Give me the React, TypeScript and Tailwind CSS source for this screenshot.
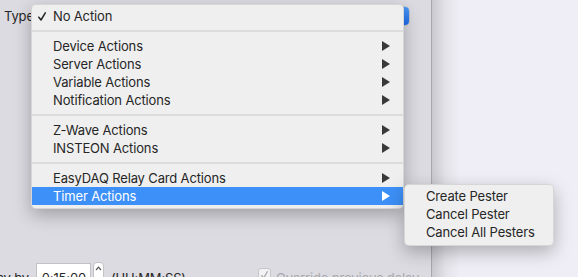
import React from "react";

type Item = { label: string; sub?: boolean; checked?: boolean; active?: boolean };

const groups: Item[][] = [
  [{ label: "No Action", checked: true }],
  [
    { label: "Device Actions", sub: true },
    { label: "Server Actions", sub: true },
    { label: "Variable Actions", sub: true },
    { label: "Notification Actions", sub: true },
  ],
  [
    { label: "Z-Wave Actions", sub: true },
    { label: "INSTEON Actions", sub: true },
  ],
  [
    { label: "EasyDAQ Relay Card Actions", sub: true },
    { label: "Timer Actions", sub: true, active: true },
  ],
];

function Arrow({ white }: { white?: boolean }) {
  return (
    <svg width="8" height="10" viewBox="0 0 8 10" className={white ? "fill-white" : "fill-[#393939]"}>
      <path d="M0 0L8 5L0 10Z" />
    </svg>
  );
}

function Check({ color = "#262626", size = 8 }: { color?: string; size?: number }) {
  return (
    <svg width={size} height={size + 1} viewBox="0 0 8 9" fill="none">
      <path d="M0.8 5.2L3 8L7.3 0.8" stroke={color} strokeWidth="1.5" strokeLinecap="round" strokeLinejoin="round" />
    </svg>
  );
}

function MenuRow({ item }: { item: Item }) {
  return (
    <div
      className={
        "flex h-[18px] items-center " +
        (item.active ? "bg-[#3d90f7] text-white" : "text-[#262626]")
      }
    >
      <div className="flex w-[21px] justify-start pl-[6px]">{item.checked && <Check />}</div>
      <span className="flex-1">{item.label}</span>
      {item.sub && (
        <div className="pr-[13px]">
          <Arrow white={item.active} />
        </div>
      )}
    </div>
  );
}

export default function App() {
  return (
    <div className="relative flex h-[277px] w-[578px] overflow-hidden font-['Inter',sans-serif] text-[13px] leading-4 tracking-[-0.15px] text-[#262626]">
      {/* dialog */}
      <div className="flex h-full w-[432px] shrink-0 flex-col border-r border-[#a9a8af] bg-[#dcdbe2]">
        <div className="flex items-center pt-[6px] pr-[21px]">
          <span className="pl-[4px]">Type</span>
          <div className="ml-[6px] flex h-[20px] flex-1 overflow-hidden rounded-[5px] border border-[#c4c4c8] bg-white">
            <div className="flex-1" />
            <div className="flex w-[17px] flex-col items-center justify-center bg-gradient-to-b from-[#4b98fa] to-[#1f6ff0] text-[7px] leading-[6px] text-white">
              <span>⌃</span>
              <span>⌄</span>
            </div>
          </div>
        </div>

        <div className="mt-auto mb-[-8px] flex h-[22px] shrink-0 items-start whitespace-nowrap">
          <span className="-ml-[23px] mt-[7px] shrink-0">Delay by</span>
          <div className="ml-[7px] flex h-[22px] w-[55px] shrink-0 items-start justify-end border border-[#c2c2c6] bg-white pr-[4px] pt-[6px]">
            0:15:00
          </div>
          <div className="ml-[2px] -mt-[1px] flex h-[22px] w-[11px] shrink-0 justify-center rounded-[4px] border border-[#c2c2c6] bg-white pt-[3px]">
            <svg width="7" height="5" viewBox="0 0 7 5" fill="none">
              <path d="M1 4L3.5 1.2L6 4" stroke="#555" strokeWidth="1.2" />
            </svg>
          </div>
          <span className="ml-[7px] mt-[7px] shrink-0">(HH:MM:SS)</span>
          <div className="ml-[72px] mt-[5px] flex h-[13px] w-[13px] shrink-0 items-center justify-center rounded-[3px] border border-[#c6c6ca] bg-[#f2f2f4]">
            <Check color="#a8a8ac" size={7} />
          </div>
          <span className="ml-[5px] mt-[7px] shrink-0 text-[#a9a9ad]">Override previous delay</span>
        </div>
      </div>

      {/* background window */}
      <div className="flex flex-1">
        <div className="w-[28px] bg-gradient-to-r from-[#c9c8cf] via-[#e4e3ea] to-[#efeef6]" />
        <div className="flex-1 bg-[#efeef6]" />
      </div>

      {/* popup menu */}
      <div className="absolute left-[31px] top-[4px] w-[373px] rounded-[5px] border border-black/10 bg-[#efefef] pt-[2px] pb-[3px] shadow-[0_6px_18px_rgba(0,0,0,0.28)]">
        {groups.map((g, i) => (
          <div key={i}>
            {i > 0 && (
              <div className="flex h-[12px] items-center">
                <div className="h-[2px] w-full bg-[#dcdcdc]" />
              </div>
            )}
            {g.map((it) => (
              <MenuRow key={it.label} item={it} />
            ))}
          </div>
        ))}
      </div>

      {/* submenu */}
      <div className="absolute left-[404px] top-[184px] w-[150px] rounded-[5px] border border-black/10 bg-[#efefef] pt-[2px] pb-[4px] shadow-[0_6px_18px_rgba(0,0,0,0.28)]">
        {["Create Pester", "Cancel Pester", "Cancel All Pesters"].map((t) => (
          <div key={t} className="flex h-[18px] items-center pl-[21px] text-[#262626]">
            {t}
          </div>
        ))}
      </div>
    </div>
  );
}
